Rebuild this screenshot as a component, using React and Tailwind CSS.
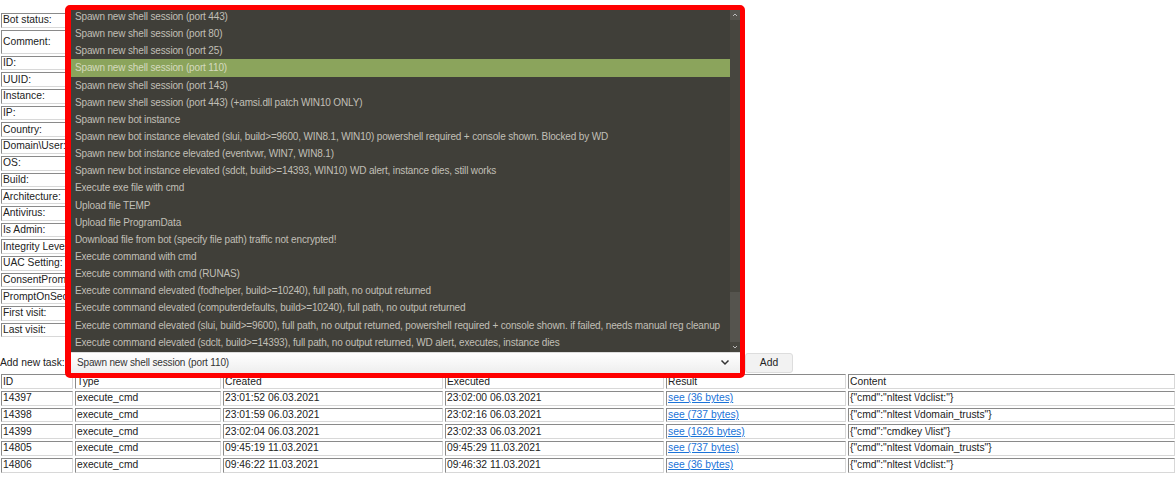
import React from 'react'

const labels = ['ID:','UUID:','Instance:','IP:','Country:','Domain\\User:','OS:','Build:','Architecture:','Antivirus:','Is Admin:','Integrity Level:','UAC Setting:','ConsentPromptBehaviorAdmin:','PromptOnSecureDesktop:','First visit:','Last visit:']

const options = [
  'Spawn new shell session (port 443)',
  'Spawn new shell session (port 80)',
  'Spawn new shell session (port 25)',
  'Spawn new shell session (port 110)',
  'Spawn new shell session (port 143)',
  'Spawn new shell session (port 443) (+amsi.dll patch WIN10 ONLY)',
  'Spawn new bot instance',
  'Spawn new bot instance elevated (slui, build>=9600, WIN8.1, WIN10) powershell required + console shown. Blocked by WD',
  'Spawn new bot instance elevated (eventvwr, WIN7, WIN8.1)',
  'Spawn new bot instance elevated (sdclt, build>=14393, WIN10) WD alert, instance dies, still works',
  'Execute exe file with cmd',
  'Upload file TEMP',
  'Upload file ProgramData',
  'Download file from bot (specify file path) traffic not encrypted!',
  'Execute command with cmd',
  'Execute command with cmd (RUNAS)',
  'Execute command elevated (fodhelper, build>=10240), full path, no output returned',
  'Execute command elevated (computerdefaults, build>=10240), full path, no output returned',
  'Execute command elevated (slui, build>=9600), full path, no output returned, powershell required + console shown. if failed, needs manual reg cleanup',
  'Execute command elevated (sdclt, build>=14393), full path, no output returned, WD alert, executes, instance dies',
]

const tasks = [
  ['14397','23:01:52 06.03.2021','23:02:00 06.03.2021','see (36 bytes)','{"cmd":"nltest \\/dclist:"}'],
  ['14398','23:01:59 06.03.2021','23:02:16 06.03.2021','see (737 bytes)','{"cmd":"nltest \\/domain_trusts"}'],
  ['14399','23:02:04 06.03.2021','23:02:33 06.03.2021','see (1626 bytes)','{"cmd":"cmdkey \\/list"}'],
  ['14805','09:45:19 11.03.2021','09:45:29 11.03.2021','see (737 bytes)','{"cmd":"nltest \\/domain_trusts"}'],
  ['14806','09:46:22 11.03.2021','09:46:32 11.03.2021','see (36 bytes)','{"cmd":"nltest \\/dclist:"}'],
]

const cell = 'border border-t-[#8a8a8a] border-l-[#8a8a8a] border-r-[#d8d8d8] border-b-[#d8d8d8] px-px py-0 whitespace-nowrap overflow-hidden text-left font-normal align-middle'

const App = () => {
  return (
    <div className="relative h-[477px] w-[1176px] overflow-hidden bg-white text-[10.3px] leading-[12px] text-[#222] font-['Liberation_Sans',Arial,sans-serif]">
      <div className="pt-[11px]">
        <table className="border-separate border-spacing-[2px] table-fixed w-[300px] -ml-px">
          <tbody>
            <tr className="h-[14.7px]"><td className={cell}>Bot status:</td></tr>
            <tr className="h-[24px]"><td className={cell}>Comment:</td></tr>
            {labels.map(l=>(
              <tr key={l} className="h-[14.7px]"><td className={cell}>{l}</td></tr>
            ))}
          </tbody>
        </table>
      </div>

      <div className="flex items-center h-[20px] mt-[14px]">
        <span className="w-[745px]">Add new task:</span>
        <button className="w-[48px] h-[20px] rounded-[3px] border border-[#ddd] bg-[#f2f2f2] text-[10.3px] text-[#222]">Add</button>
      </div>

      <table className="border-separate border-spacing-[2px] table-fixed w-[1178px] -ml-px -mt-[1px]">
        <colgroup>
          <col className="w-[72px]" /><col className="w-[146px]" /><col className="w-[220px]" /><col className="w-[219px]" /><col className="w-[180px]" /><col />
        </colgroup>
        <thead>
          <tr className="h-[14.7px]">
            {['ID','Type','Created','Executed','Result','Content'].map(h=>(
              <th key={h} className={cell}>{h}</th>
            ))}
          </tr>
        </thead>
        <tbody>
          {tasks.map(t=>(
            <tr key={t[0]} className="h-[14.7px]">
              <td className={cell}>{t[0]}</td>
              <td className={cell}>execute_cmd</td>
              <td className={cell}>{t[1]}</td>
              <td className={cell}>{t[2]}</td>
              <td className={cell}><a href="#" className="text-[#1a73d8] underline">{t[3]}</a></td>
              <td className={cell}>{t[4]}</td>
            </tr>
          ))}
        </tbody>
      </table>

      {/* open dropdown with the red highlight round it */}
      <div className="absolute left-[65px] top-[5px] w-[680px] h-[373px] flex flex-col border-[5px] border-l-[6px] border-[#ff0000] rounded-[5px] bg-white">
        <div className="relative h-[342px] overflow-hidden bg-[#403f39]">
          <div className="-mt-[2px] pr-[10px]">
            {options.map((o,i)=>(
              <div key={o} className={`h-[17.15px] leading-[17px] pl-[4px] text-[10px] tracking-[-0.15px] whitespace-nowrap ${i===3 ? 'bg-[#8ba45c] text-[#d5dabf]' : 'text-[#c0bfb7]'}`}>{o}</div>
            ))}
          </div>
          <div className="absolute right-0 top-0 bottom-0 w-[10px] bg-[#47463f]">
            <div className="absolute top-0 left-0 w-[10px] h-[10px] flex items-center justify-center bg-[#55544e]">
              <svg width="6" height="4" viewBox="0 0 6 4" fill="none" stroke="#bbb"><path d="M1 3l2-2 2 2" /></svg>
            </div>
            <div className="absolute bottom-[10px] left-0 w-[10px] h-[50px] bg-[#55544e]" />
            <div className="absolute bottom-0 left-0 w-[10px] h-[10px] flex items-center justify-center">
              <svg width="6" height="4" viewBox="0 0 6 4" fill="none" stroke="#bbb"><path d="M1 1l2 2 2-2" /></svg>
            </div>
          </div>
        </div>
        <div className="flex-1 flex items-center justify-between pl-[6px] pr-[10px] pb-px bg-gradient-to-b from-white to-[#eeeeee] border-t border-[#ddd] text-[10px] tracking-[-0.15px] text-[#333]">
          <span>Spawn new shell session (port 110)</span>
          <svg width="10" height="7" viewBox="0 0 10 7" fill="none" stroke="#333" strokeWidth="1.5"><path d="M1.5 1.5L5 5l3.5-3.5" /></svg>
        </div>
      </div>
    </div>
  )
}

export default App
